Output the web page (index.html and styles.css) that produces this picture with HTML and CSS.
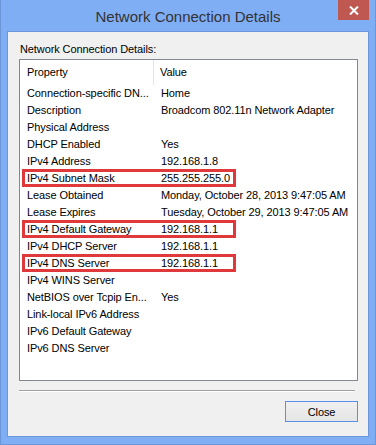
FILE: index.html
```html
<!DOCTYPE html>
<html>
<head>
<meta charset="utf-8">
<title>Network Connection Details</title>
<link rel="stylesheet" href="styles.css">
</head>
<body>
  <div class="window">
    <div class="titlebar">
      <span class="title">Network Connection Details</span>
      <div class="close-x">
        <svg width="10" height="9" viewBox="0 0 10 9"><path d="M1 0.5 L9 8.5 M9 0.5 L1 8.5" stroke="#fff" stroke-width="2"/></svg>
      </div>
    </div>
    <div class="panel">
      <div class="caption">Network Connection Details:</div>
      <div class="listview">
        <div class="header">
          <div class="col-prop">Property</div>
          <div class="col-val">Value</div>
        </div>
        <div class="row"><div class="col-prop">Connection-specific DN...</div><div class="col-val">Home</div></div>
        <div class="row"><div class="col-prop">Description</div><div class="col-val">Broadcom 802.11n Network Adapter</div></div>
        <div class="row"><div class="col-prop">Physical Address</div><div class="col-val"></div></div>
        <div class="row"><div class="col-prop">DHCP Enabled</div><div class="col-val">Yes</div></div>
        <div class="row"><div class="col-prop">IPv4 Address</div><div class="col-val">192.168.1.8</div></div>
        <div class="row mark"><div class="col-prop">IPv4 Subnet Mask</div><div class="col-val">255.255.255.0</div></div>
        <div class="row"><div class="col-prop">Lease Obtained</div><div class="col-val">Monday, October 28, 2013 9:47:05 AM</div></div>
        <div class="row"><div class="col-prop">Lease Expires</div><div class="col-val">Tuesday, October 29, 2013 9:47:05 AM</div></div>
        <div class="row mark"><div class="col-prop">IPv4 Default Gateway</div><div class="col-val">192.168.1.1</div></div>
        <div class="row"><div class="col-prop">IPv4 DHCP Server</div><div class="col-val">192.168.1.1</div></div>
        <div class="row mark"><div class="col-prop">IPv4 DNS Server</div><div class="col-val">192.168.1.1</div></div>
        <div class="row"><div class="col-prop">IPv4 WINS Server</div><div class="col-val"></div></div>
        <div class="row"><div class="col-prop">NetBIOS over Tcpip En...</div><div class="col-val">Yes</div></div>
        <div class="row"><div class="col-prop">Link-local IPv6 Address</div><div class="col-val"></div></div>
        <div class="row"><div class="col-prop">IPv6 Default Gateway</div><div class="col-val"></div></div>
        <div class="row"><div class="col-prop">IPv6 DNS Server</div><div class="col-val"></div></div>
      </div>
      <div class="separator"></div>
      <div class="buttons">
        <button class="btn">Close</button>
      </div>
    </div>
  </div>
</body>
</html>
```

FILE: styles.css
```css
body {
  margin: 0;
  padding: 0;
  font-family: "Liberation Sans", Arial, sans-serif;
  font-size: 11px;
  letter-spacing: -0.1px;
  color: #000;
  background: #7fadf4;
}
.window {
  position: relative;
  width: 376px;
  height: 445px;
  box-sizing: border-box;
  background: #80aef5;
  border: 1px solid #6b97d9;
  border-top: none;
}
.titlebar {
  height: 31px;
  display: flex;
  align-items: center;
  justify-content: center;
}
.title {
  font-size: 15px;
  letter-spacing: 0;
  color: #333;
  margin-top: 1px;
}
.close-x {
  position: absolute;
  top: 0;
  right: 6px;
  width: 31px;
  height: 20px;
  background: #bf5850;
  display: flex;
  align-items: center;
  justify-content: center;
}
.panel {
  margin: 0 6px 0 6px;
  height: 406px;
  box-sizing: border-box;
  background: #f0f0f0;
  border: 1px solid #6c98da;
  padding: 9px 10px 0 11px;
}
.caption {
  height: 18px;
  line-height: 17px;
  padding-left: 1px;
}
.listview {
  height: 322px;
  box-sizing: border-box;
  background: #fff;
  border: 1px solid #828790;
}
.header {
  display: flex;
  height: 25px;
  line-height: 25px;
}
.header .col-prop {
  border-right: 1px solid #e5e5e5;
  width: 126px;
}
.row {
  position: relative;
  display: flex;
  height: 17px;
  line-height: 17px;
  white-space: nowrap;
}
.col-prop {
  width: 127px;
  padding-left: 7px;
  flex: none;
}
.col-val {
  padding-left: 7px;
}
.header .col-val {
  padding-left: 6px;
}
.row.mark::after {
  content: "";
  position: absolute;
  left: 2px;
  top: -1px;
  width: 208px;
  height: 12px;
  border: 3px solid #e0393b;
}
.separator {
  margin-top: 9px;
  height: 1px;
  width: 336px;
  background: #a0a0a0;
  border-bottom: 1px solid #fff;
}
.buttons {
  display: flex;
  justify-content: flex-end;
  padding-top: 9px;
}
.btn {
  width: 73px;
  height: 21px;
  font-family: "Liberation Sans", Arial, sans-serif;
  font-size: 11px;
  letter-spacing: -0.1px;
  color: #000;
  background: linear-gradient(#f0f0f0, #e5e5e5);
  border: 1px solid #5c8fe6;
  padding: 0;
}
```
